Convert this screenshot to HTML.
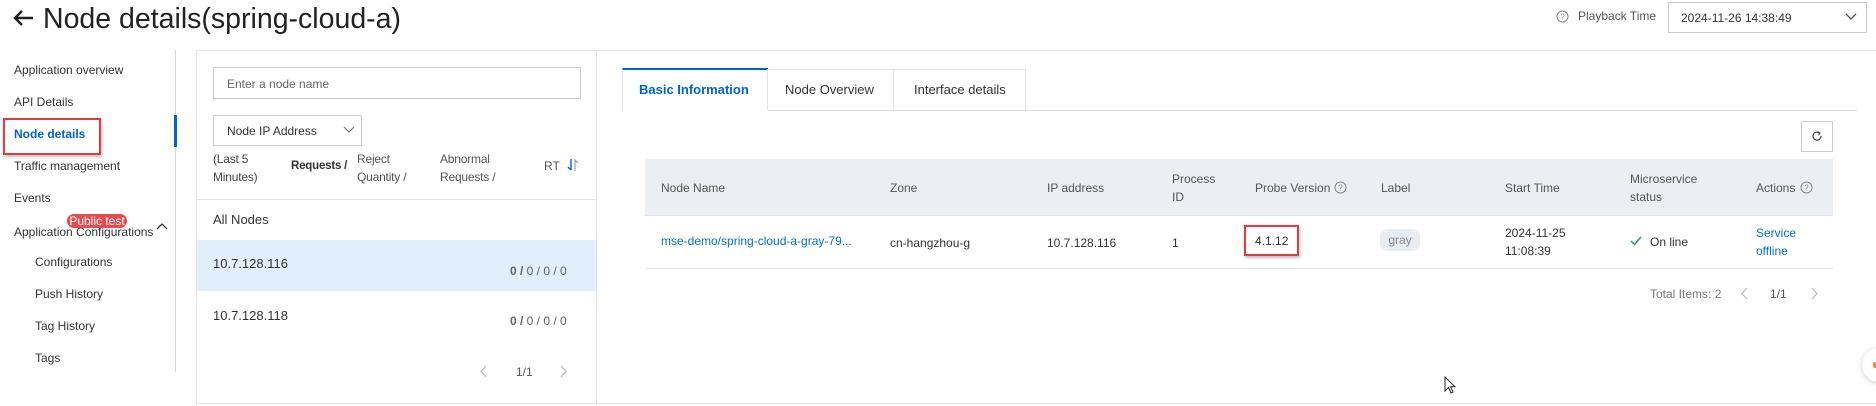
<!DOCTYPE html>
<html><head><meta charset="utf-8"><style>
*{margin:0;padding:0;box-sizing:border-box}
body{width:1876px;height:406px;background:#fff;font-family:"Liberation Sans",sans-serif;font-size:12px;color:#333;position:relative;overflow:hidden}
.a{position:absolute;white-space:nowrap;line-height:16px}
.ln{position:absolute;background:#e3e3e3}
.blue{color:#0070cc}
.th{color:#555}
.n{letter-spacing:-0.2px}
</style></head><body>
<svg class="a" style="left:13px;top:9px" width="21" height="18" viewBox="0 0 21 18"><path d="M20 9H2M9 2L2 9l7 7" fill="none" stroke="#222" stroke-width="2.4"/></svg>
<div class="a" style="left:43px;top:2px;font-size:28.5px;line-height:34px;color:#222">Node details(spring-cloud-a)</div>

<svg class="a" style="left:1556px;top:10px" width="13" height="13" viewBox="0 0 13 13"><circle cx="6.5" cy="6.5" r="5.5" fill="none" stroke="#888" stroke-width="1"/><text x="6.5" y="9.5" font-size="8" text-anchor="middle" fill="#888" font-family="Liberation Sans">?</text></svg>
<div class="a" style="left:1578px;top:8px;color:#555">Playback Time</div>
<div class="a" style="left:1668px;top:2px;width:199px;height:31px;border:1px solid #ccc;background:#fff"></div>
<div class="a" style="left:1681px;top:10px;color:#333">2024-11-26 14:38:49</div>
<svg class="a" style="left:1845px;top:13px" width="12" height="8"><path d="M1 1l5 5 5-5" fill="none" stroke="#555" stroke-width="1.3"/></svg>

<div class="ln" style="left:196px;top:50px;width:1680px;height:1px"></div>

<!-- left nav -->
<div class="a" style="left:14px;top:62px">Application overview</div>
<div class="a" style="left:14px;top:94px">API Details</div>
<div class="a" style="left:14px;top:126px;color:#0064c8;font-weight:bold">Node details</div>
<div class="a" style="left:3px;top:118px;width:98px;height:37px;border:2px solid #e8393e;box-shadow:1px 2px 3px rgba(0,0,0,.25)"></div>
<div class="a" style="left:14px;top:158px">Traffic management</div>
<div class="a" style="left:14px;top:190px">Events</div>
<div class="a" style="left:14px;top:224px">Application Configurations</div>
<div class="a" style="left:67px;top:214px;width:60px;height:14px;border-radius:7px;background:#e84a4f;color:#fff;font-size:12px;line-height:14px;text-align:center">Public test</div>
<svg class="a" style="left:156px;top:222px" width="12" height="8"><path d="M1 7l5-5 5 5" fill="none" stroke="#333" stroke-width="1.3"/></svg>
<div class="a" style="left:35px;top:254px">Configurations</div>
<div class="a" style="left:35px;top:286px">Push History</div>
<div class="a" style="left:35px;top:318px">Tag History</div>
<div class="a" style="left:35px;top:350px">Tags</div>
<div class="ln" style="left:175px;top:50px;width:1px;height:322px;background:#d6d6d6"></div>
<div class="a" style="left:174px;top:115px;width:3px;height:32px;background:#0064c8"></div>

<!-- middle panel -->
<div class="a" style="left:196px;top:50px;width:401px;height:354px;border:1px solid #e3e3e3;border-top:none"></div>
<div class="a" style="left:213px;top:67px;width:368px;height:32px;border:1px solid #ccc"></div>
<div class="a" style="left:227px;top:76px;color:#666;font-size:12px">Enter a node name</div>
<div class="a" style="left:213px;top:115px;width:149px;height:31px;border:1px solid #ccc"></div>
<div class="a" style="left:227px;top:123px">Node IP Address</div>
<svg class="a" style="left:343px;top:126px" width="12" height="8"><path d="M1 1l5 5 5-5" fill="none" stroke="#777" stroke-width="1.2"/></svg>
<div class="a n" style="left:213px;top:150px;line-height:18px;color:#444">(Last 5<br>Minutes)</div>
<div class="a n" style="left:291px;top:158px;font-weight:bold;font-size:11.5px">Requests /</div>
<div class="a n" style="left:357px;top:150px;line-height:18px;color:#555">Reject<br>Quantity /</div>
<div class="a n" style="left:440px;top:150px;line-height:18px;color:#555">Abnormal<br>Requests /</div>
<div class="a" style="left:544px;top:158px;color:#555">RT</div>
<svg class="a" style="left:567px;top:158px" width="12" height="14"><path d="M4 1v11M1 9l3 3" fill="none" stroke="#0064c8" stroke-width="1.4"/><path d="M8 13V2l3 3" fill="none" stroke="#999" stroke-width="1.1"/></svg>
<div class="ln" style="left:197px;top:199px;width:399px;height:1px"></div>
<div class="a" style="left:213px;top:212px;font-size:13px">All Nodes</div>
<div class="a" style="left:197px;top:240px;width:399px;height:51px;background:#e1eefb"></div>
<div class="a" style="left:213px;top:256px;font-size:13px">10.7.128.116</div>
<div class="a" style="left:510px;top:263px;color:#666"><b>0 /</b> 0 / 0 / 0</div>
<div class="a" style="left:213px;top:308px;font-size:13px">10.7.128.118</div>
<div class="a" style="left:510px;top:313px;color:#666"><b>0 /</b> 0 / 0 / 0</div>
<svg class="a" style="left:479px;top:365px" width="8" height="13"><path d="M7 1L2 6.5 7 12" fill="none" stroke="#bbb" stroke-width="1.3"/></svg>
<div class="a" style="left:516px;top:364px;color:#555">1/1</div>
<svg class="a" style="left:560px;top:365px" width="8" height="13"><path d="M1 1l5 5.5L1 12" fill="none" stroke="#bbb" stroke-width="1.3"/></svg>

<!-- right panel -->
<div class="ln" style="left:597px;top:403px;width:1279px;height:1px"></div>
<div class="ln" style="left:622px;top:110px;width:1235px;height:1px"></div>
<div class="a" style="left:622px;top:68px;width:146px;height:43px;background:#fff;border-top:2px solid #0064c8;border-left:1px solid #e3e3e3"></div>
<div class="a" style="left:767px;top:69px;width:127px;height:41px;border:1px solid #e3e3e3;border-bottom:none"></div>
<div class="a" style="left:893px;top:69px;width:133px;height:41px;border:1px solid #e3e3e3;border-bottom:none"></div>
<div class="a" style="left:639px;top:82px;font-size:13px;color:#0064c8;font-weight:bold">Basic Information</div>
<div class="a" style="left:785px;top:82px;font-size:13px">Node Overview</div>
<div class="a" style="left:914px;top:82px;font-size:13px">Interface details</div>
<div class="a" style="left:1801px;top:121px;width:32px;height:31px;border:1px solid #ccc"></div>
<svg class="a" style="left:1811px;top:130px" width="12" height="12"><path d="M8.5 3A4 4 0 1 0 10 6" fill="none" stroke="#444" stroke-width="1.2"/><path d="M6.5 1.5l2.5 1.5-1.5 2.3" fill="none" stroke="#444" stroke-width="1.1"/></svg>

<div class="a" style="left:645px;top:159px;width:1188px;height:56px;background:#ebeef3"></div>
<div class="ln" style="left:645px;top:215px;width:1188px;height:1px"></div>
<div class="ln" style="left:645px;top:268px;width:1188px;height:1px"></div>
<div class="a th" style="left:661px;top:180px">Node Name</div>
<div class="a th" style="left:890px;top:180px">Zone</div>
<div class="a th" style="left:1047px;top:180px">IP address</div>
<div class="a th" style="left:1172px;top:170px;line-height:18px">Process<br>ID</div>
<div class="a th" style="left:1255px;top:180px">Probe Version</div>
<svg class="a" style="left:1334px;top:181px" width="13" height="13"><circle cx="6.5" cy="6.5" r="5.5" fill="none" stroke="#888"/><text x="6.5" y="9.5" font-size="8" text-anchor="middle" fill="#888" font-family="Liberation Sans">?</text></svg>
<div class="a th" style="left:1381px;top:180px">Label</div>
<div class="a th" style="left:1505px;top:180px">Start Time</div>
<div class="a th" style="left:1630px;top:170px;line-height:18px">Microservice<br>status</div>
<div class="a th" style="left:1756px;top:180px">Actions</div>
<svg class="a" style="left:1800px;top:181px" width="13" height="13"><circle cx="6.5" cy="6.5" r="5.5" fill="none" stroke="#888"/><text x="6.5" y="9.5" font-size="8" text-anchor="middle" fill="#888" font-family="Liberation Sans">?</text></svg>

<div class="a blue" style="left:661px;top:233px">mse-demo/spring-cloud-a-gray-79...</div>
<div class="a" style="left:890px;top:235px">cn-hangzhou-g</div>
<div class="a" style="left:1047px;top:235px">10.7.128.116</div>
<div class="a" style="left:1172px;top:235px">1</div>
<div class="a" style="left:1244px;top:225px;width:55px;height:31px;border:2px solid #e8393e;box-shadow:1px 2px 3px rgba(0,0,0,.25)"></div>
<div class="a" style="left:1255px;top:233px">4.1.12</div>
<div class="a" style="left:1380px;top:229px;width:40px;height:22px;border-radius:8px;background:#e8edf3;color:#888;text-align:center;line-height:22px">gray</div>
<div class="a" style="left:1505px;top:224px;line-height:18px">2024-11-25<br>11:08:39</div>
<svg class="a" style="left:1630px;top:236px" width="12" height="10"><path d="M1 5l3.5 3.5L11 1" fill="none" stroke="#1fa84c" stroke-width="1.5"/></svg>
<div class="a" style="left:1650px;top:234px">On line</div>
<div class="a blue" style="left:1756px;top:224px;line-height:18px">Service<br>offline</div>

<div class="a" style="left:1650px;top:286px;color:#777">Total Items: 2</div>
<svg class="a" style="left:1740px;top:287px" width="8" height="13"><path d="M7 1L2 6.5 7 12" fill="none" stroke="#bbb" stroke-width="1.3"/></svg>
<div class="a" style="left:1770px;top:286px;color:#555">1/1</div>
<svg class="a" style="left:1811px;top:287px" width="8" height="13"><path d="M1 1l5 5.5L1 12" fill="none" stroke="#bbb" stroke-width="1.3"/></svg>

<div class="a" style="left:1862px;top:348px;width:34px;height:34px;border-radius:50%;background:#fff;box-shadow:0 1px 6px rgba(0,0,0,.2)"></div>
<div class="a" style="left:1873px;top:362px;width:4px;height:6px;background:#f08a3c;border-radius:2px"></div>

<svg class="a" style="left:1444px;top:376px" width="12" height="19"><path d="M1 1v14l3.5-3.5 2.5 5.5 2-1-2.5-5.2H11z" fill="#fff" stroke="#222" stroke-width="1"/></svg>
</body></html>
